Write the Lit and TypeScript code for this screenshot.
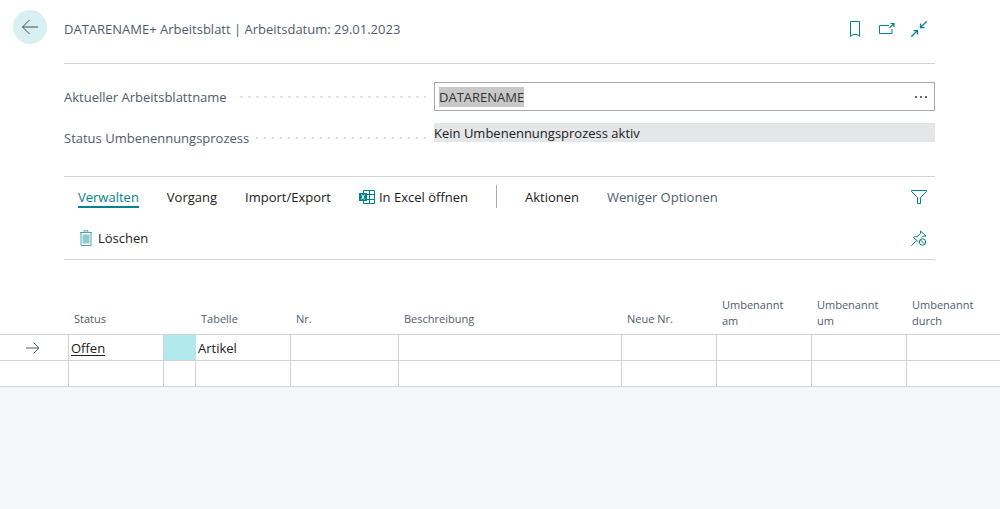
import { LitElement, html, css, svg } from "lit";
import { customElement, state } from "lit/decorators.js";
import { classMap } from "lit/directives/class-map.js";

interface Column {
  label: string;
  size: string;
  wraps?: boolean;
}

const COLUMNS: Column[] = [
  { label: "", size: "marker" },
  { label: "Status", size: "medium" },
  { label: "", size: "narrow" },
  { label: "Tabelle", size: "medium" },
  { label: "Nr.", size: "number" },
  { label: "Beschreibung", size: "fill" },
  { label: "Neue Nr.", size: "medium" },
  { label: "Umbenannt am", size: "medium", wraps: true },
  { label: "Umbenannt um", size: "medium", wraps: true },
  { label: "Umbenannt durch", size: "last", wraps: true },
];

const icon = (body: unknown, size = 16) => html`<svg
  class="icon"
  width=${size}
  height=${size}
  viewBox="0 0 ${size} ${size}"
  fill="none"
  stroke="currentColor"
  aria-hidden="true"
>${body}</svg>`;

const backIcon = icon(svg`<path d="M17 9H1.500M8.500 2L1.500 9L8.500 16"/>`, 18);
const bookmarkIcon = icon(svg`<path d="M3.500 .5h9v15l-2.500-2h-4l-2.500 2z"/>`);
const popoutIcon = icon(svg`<path d="M10 4.500H.5v8h12.500V8"/><path d="M10.500 7l4.500-4.500M11.500 2.500H15V6" stroke-width="1.200"/>`);
const collapseIcon = icon(svg`<path d="M15.700 .3L9.500 6.500M9.500 2.500v4h4M.3 15.700L6.500 9.500M2.500 9.500h4v4" stroke-width="1.250"/>`);
const filterIcon = icon(svg`<path d="M.5 1.500h15v1L9.500 8.500v6h-3v-6L.5 2.500z"/>`);
const unpinIcon = icon(svg`<path d="M.3 15.700L5 11M2.500 7.500L7.500 12M2.500 7.500c1-1 2.500-1 3.500-.8L9.500 3.500V1l5.500 5h-2.500l-1.500 1.500"/><circle cx="11.500" cy="12" r="3.200"/><path d="M9.300 9.800l4.400 4.400"/>`);
const trashIcon = icon(svg`<path d="M4.500 4.500h7v9h-7z" fill="#8fcbcb" stroke="none"/><path d="M2 2.500h12M6 2V.8h4V2M3 3v12.500h10V3" stroke="#4aa9ac"/>`);
const excelIcon = icon(svg`<path d="M4.500 1.500h11v13h-11zM4.500 5.500h11M4.500 10.500h11M10.500 1.500v13"/><path d="M0 4h8v8H0z" fill="currentColor" stroke="none"/><path d="M2.500 5.500l3 5M5.500 5.500l-3 5" stroke="#fff"/>`);
const rowIcon = icon(svg`<path d="M1 8h12.500M8.500 2.500L14 8l-5.500 5.500"/>`);

@customElement("app-root")
export class AppRoot extends LitElement {
  @state() private tab = "Verwalten";

  static styles = css`
    :host {
      display: block;
      min-height: 100vh;
      background: #f5f6f8;
      color: #212121;
      font-family: "Open Sans", "Noto Sans", sans-serif;
      font-size: 13px;
      line-height: 20px;
    }
    * { box-sizing: border-box; }
    button, input { font: inherit; color: inherit; }
    button {
      display: inline-flex;
      align-items: center;
      gap: 4px;
      padding: 0;
      border: 0;
      background: none;
      white-space: nowrap;
      cursor: pointer;
    }
    .icon { display: block; flex: none; }
    .sheet { background: #fff; }
    .top { display: flex; }
    .rail { flex: none; width: 64px; padding: 10px 0 0 13px; }
    .back {
      justify-content: center;
      width: 34px;
      height: 34px;
      border-radius: 50%;
      background: #d9f0f2;
      color: #404b55;
    }
    .main { flex: 1; min-width: 0; margin-right: 65px; }
    .head {
      display: flex;
      align-items: center;
      justify-content: space-between;
      height: 64px;
      padding-bottom: 6px;
      border-bottom: 1px solid #d2d3d6;
    }
    h1 { margin: 0; font-size: 13px; font-weight: 400; color: #505c6d; }
    .tools { display: flex; gap: 16px; padding-right: 8px; color: #00838a; }
    .fields {
      display: grid;
      gap: 12px;
      padding: 18px 0 24px;
    }
    .field { display: grid; grid-template-columns: 370px minmax(0, 1fr); }
    .caption { display: flex; align-items: center; gap: 7px; padding-right: 8px; height: 29px; }
    .caption label { color: #505c6d; }
    .leader {
      flex: 1;
      height: 2px;
      background: linear-gradient(90deg, transparent 6px, #d9dadd 6px) right center / 8px 2px repeat-x;
    }
    .box {
      display: flex;
      align-items: center;
      height: 29px;
      padding: 0 6px 0 4px;
      border: 1px solid #a6a8ab;
    }
    .box input { flex: 1; min-width: 0; padding: 0; border: 0; outline: 0; background: none; }
    .box input::selection { background: #c8c8c8; color: #333; }
    .readonly {
      display: block;
      width: 100%;
      height: 19px;
      padding: 0;
      border: 0;
      outline: 0;
      background: #e5e6e8;
    }
    .actions { border: solid #d2d3d6; border-width: 1px 0; }
    .bar { display: flex; align-items: center; gap: 28px; height: 41px; padding: 0 8px 2px 14px; }
    .bar .end { margin-left: auto; color: #00838a; }
    .tab { border: solid transparent; border-width: 2px 0; line-height: 18px; }
    .tab.active { color: #00838a; border-bottom-color: #00838a; }
    .tab.quiet { color: #505c6d; }
    .tab .icon { color: #00838a; }
    .divider { width: 1px; height: 23px; background: #a5abb5; }
    table {
      width: 100%;
      margin-top: 32px;
      table-layout: fixed;
      border-collapse: separate;
      border-spacing: 0;
    }
    .marker { width: 68px; }
    .medium { width: 95px; }
    .narrow { width: 32px; }
    .number { width: 108px; }
    .last { width: 94px; }
    th {
      height: 43px;
      padding: 0 16px 7px 6px;
      border-bottom: 1px solid #d0d3d8;
      vertical-align: bottom;
      text-align: left;
      font-size: 11px;
      font-weight: 400;
      line-height: 16px;
      color: #505c6d;
    }
    th.wraps { padding-bottom: 5px; }
    td {
      height: 26px;
      padding: 0 2px;
      border: solid #d0d3d8;
      border-width: 0 0 1px 1px;
    }
    td:first-child { border-left: 0; padding-left: 25px; color: #505c6d; }
    td.current { background: #b2e9ec; }
    td.current + td { border-left-color: #b2e9ec; }
    td a { color: inherit; text-underline-offset: 2px; }
  `;

  protected firstUpdated() {
    const input = this.renderRoot.querySelector<HTMLInputElement>("#sheet-name");
    input?.focus();
    input?.select();
  }

  private renderTab(label: string, kind = "", glyph: unknown = null) {
    return html`<button
      class=${classMap({ tab: true, active: this.tab === label, quiet: kind === "quiet" })}
      @click=${() => (this.tab = label)}
    >${glyph}${label}</button>`;
  }

  render() {
    return html`
      <div class="sheet">
        <div class="top">
          <div class="rail"><button class="back" aria-label="Zurück">${backIcon}</button></div>
          <main class="main">
            <header class="head">
              <h1>DATARENAME+ Arbeitsblatt | Arbeitsdatum: 29.01.2023</h1>
              <div class="tools">
                <button aria-label="Lesezeichen">${bookmarkIcon}</button>
                <button aria-label="In neuem Fenster öffnen">${popoutIcon}</button>
                <button aria-label="Verkleinern">${collapseIcon}</button>
              </div>
            </header>
            <section class="fields">
              <div class="field">
                <div class="caption"><label for="sheet-name">Aktueller Arbeitsblattname</label><span class="leader"></span></div>
                <div class="box">
                  <input id="sheet-name" value="DATARENAME" autocomplete="off" spellcheck="false" />
                  <button aria-label="Auswählen">
                    <svg class="icon" width="14" height="4" viewBox="0 0 14 4" fill="#333" aria-hidden="true">
                      <circle cx="2" cy="2" r="1" /><circle cx="7" cy="2" r="1" /><circle cx="12" cy="2" r="1" />
                    </svg>
                  </button>
                </div>
              </div>
              <div class="field">
                <div class="caption"><label for="process">Status Umbenennungsprozess</label><span class="leader"></span></div>
                <div><input class="readonly" id="process" readonly value="Kein Umbenennungsprozess aktiv" /></div>
              </div>
            </section>
            <section class="actions">
              <nav class="bar">
                ${this.renderTab("Verwalten")} ${this.renderTab("Vorgang")} ${this.renderTab("Import/Export")}
                ${this.renderTab("In Excel öffnen", "", excelIcon)}
                <span class="divider"></span>
                ${this.renderTab("Aktionen")} ${this.renderTab("Weniger Optionen", "quiet")}
                <button class="end" aria-label="Filter">${filterIcon}</button>
              </nav>
              <div class="bar">
                <button>${trashIcon}Löschen</button>
                <button class="end" aria-label="Loslösen">${unpinIcon}</button>
              </div>
            </section>
          </main>
        </div>
        <table>
          <thead>
            <tr>
              ${COLUMNS.map((c) => html`<th class=${classMap({ [c.size]: true, wraps: !!c.wraps })} scope="col">${c.label}</th>`)}
            </tr>
          </thead>
          <tbody>
            <tr>
              <td>${rowIcon}</td>
              <td><a href="#">Offen</a></td>
              <td class="current"></td>
              <td>Artikel</td>
              ${COLUMNS.slice(4).map(() => html`<td></td>`)}
            </tr>
            <tr>${COLUMNS.map(() => html`<td></td>`)}</tr>
          </tbody>
        </table>
      </div>
    `;
  }
}
